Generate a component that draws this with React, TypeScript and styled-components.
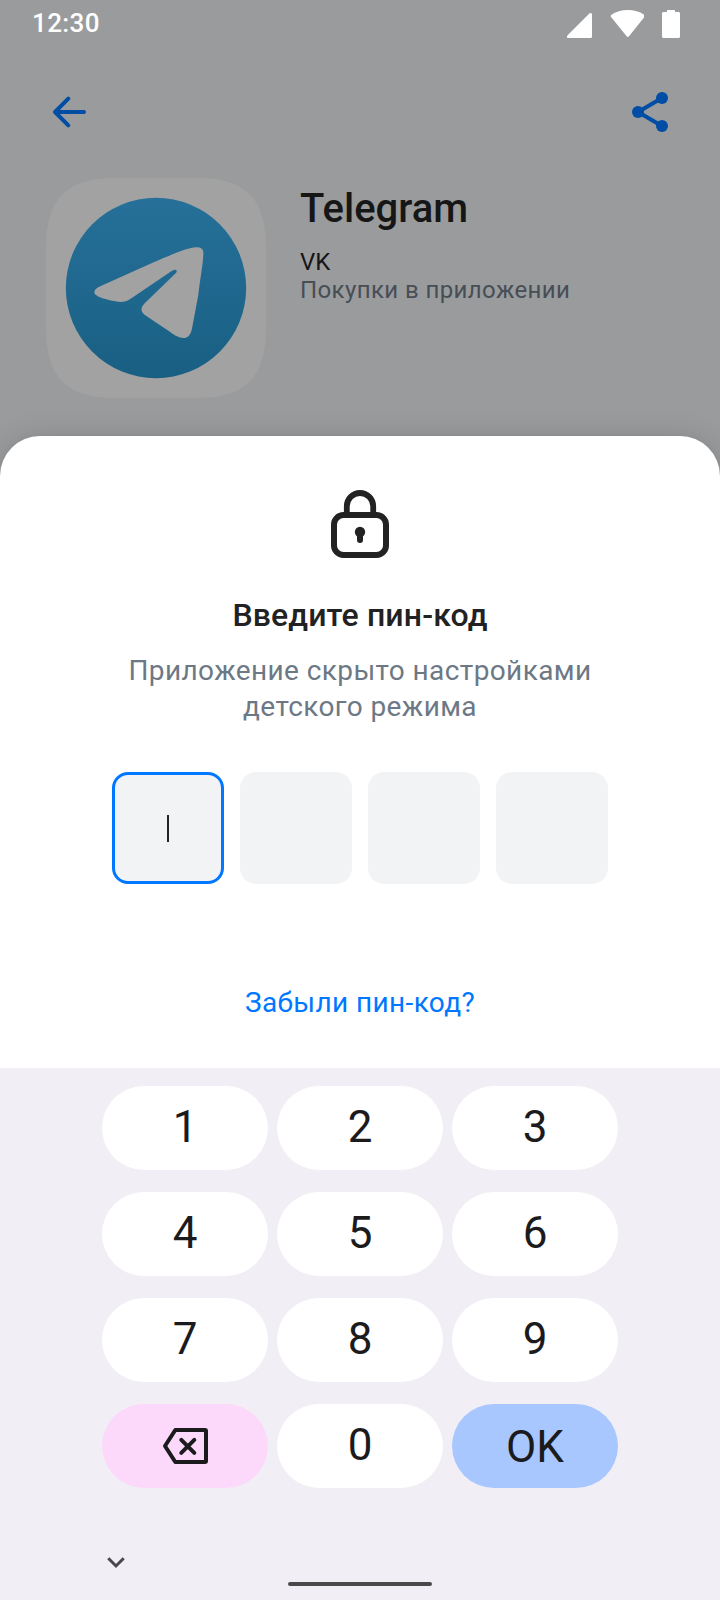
import React from "react";
import styled, { createGlobalStyle } from "styled-components";

const GlobalStyle = createGlobalStyle`
  * { box-sizing: border-box; }
  body { margin: 0; background: #fff; font-family: Roboto, "Liberation Sans", sans-serif; }
  button { border: 0; padding: 0; background: none; font: inherit; color: inherit; }
  svg { display: block; flex: none; }
  h1, h2, p { margin: 0; }
`;

const Screen = styled.div`
  width: 720px;
  height: 1600px;
  display: flex;
  flex-direction: column;
  overflow: hidden;
  background: #9a9b9d;
`;

const StatusBar = styled.header`
  height: 48px;
  display: flex;
  justify-content: space-between;
  padding: 8px 40px 0 32px;
  color: #fff;
`;

const Clock = styled.time`
  font-size: 26px;
  line-height: 30px;
  font-weight: 500;
  letter-spacing: 0.4px;
`;

const StatusIcons = styled.div`
  display: flex;
  gap: 18px;
  padding-top: 2px;
`;

const Toolbar = styled.nav`
  height: 128px;
  display: flex;
  align-items: center;
  justify-content: space-between;
  padding: 0 44px;
  color: #004da6;
`;

const IconButton = styled.button`
  width: 48px;
  height: 48px;
`;

const AppHeader = styled.section`
  height: 260px;
  display: flex;
  gap: 34px;
  padding: 2px 46px 0;
`;

const AppInfo = styled.div`
  padding-top: 7px;
`;

const AppName = styled.h1`
  font-size: 40px;
  line-height: 48px;
  font-weight: 500;
  color: #161616;
`;

const AppMeta = styled.p<{ $muted?: boolean }>`
  font-size: 24px;
  line-height: 28px;
  letter-spacing: ${(p) => (p.$muted ? "0.4px" : "0")};
  color: ${(p) => (p.$muted ? "#474e56" : "#161616")};
`;

const MetaList = styled.div`
  padding-top: 15px;
`;

const Sheet = styled.main`
  height: 632px;
  flex: none;
  display: flex;
  flex-direction: column;
  align-items: center;
  padding-top: 48px;
  border-radius: 40px 40px 0 0;
  background: #fff;
  box-shadow: 0 0 4px rgba(0, 0, 0, 0.04), 0 4px 32px rgba(0, 0, 0, 0.16);
`;

const Title = styled.h2`
  margin-top: 31px;
  font-size: 32px;
  line-height: 40px;
  font-weight: 500;
  letter-spacing: 0.15px;
  color: #222;
`;

const Description = styled.p`
  margin-top: 18px;
  width: 520px;
  text-align: center;
  font-size: 28px;
  line-height: 36px;
  letter-spacing: 0.4px;
  color: #6d7885;
`;

const PinRow = styled.div`
  display: flex;
  gap: 16px;
  margin-top: 47px;
`;

const PinCell = styled.div<{ $active?: boolean }>`
  width: 112px;
  height: 112px;
  display: flex;
  align-items: center;
  justify-content: center;
  border-radius: 16px;
  border: ${(p) => (p.$active ? "3px solid #0077ff" : "0")};
  background: #f2f3f5;
`;

const Caret = styled.span`
  width: 2px;
  height: 27px;
  margin-top: 1px;
  background: #222;
`;

const ForgotLink = styled.button`
  margin-top: 101px;
  font-size: 28px;
  line-height: 36px;
  letter-spacing: 0.38px;
  color: #0077ff;
`;

const Keyboard = styled.section`
  flex: 1;
  display: flex;
  flex-direction: column;
  align-items: center;
  padding-top: 18px;
  background: #f1eff5;
`;

const Keys = styled.div`
  display: grid;
  grid-template-columns: repeat(3, 166px);
  grid-auto-rows: 84px;
  gap: 22px 9px;
`;

const tones = { plain: "#fff", pink: "#fcd8fa", blue: "#a8c7ff" };

const Key = styled.button<{ $tone?: keyof typeof tones; $raise?: number }>`
  display: flex;
  align-items: center;
  justify-content: center;
  padding-bottom: ${(p) => p.$raise ?? 3}px;
  border-radius: 42px;
  background: ${(p) => tones[p.$tone ?? "plain"]};
  color: #1b1b1d;
  font-size: 44px;
  line-height: 52px;
`;

const OkLabel = styled.span`
  padding-top: 2px;
`;

const KeyboardFooter = styled.footer`
  align-self: stretch;
  display: flex;
  flex-direction: column;
  padding-top: 60px;
`;

const HideButton = styled.button`
  width: 32px;
  height: 32px;
  margin-left: 100px;
`;

const HomeBar = styled.div`
  width: 144px;
  height: 4px;
  align-self: center;
  margin-top: 2px;
  border-radius: 2px;
  background: #4a484b;
`;

const SignalIcon = () => (
  <svg width="26" height="28" viewBox="0 0 26 28" fill="#fff">
    <path d="M2 28h22.4c.9 0 1.6-.7 1.6-1.6V4.4c0-1.5-1.6-2-2.6-1L1.6 25.2C.6 26.3.7 28 2 28z" />
  </svg>
);

const WifiIcon = () => (
  <svg width="34" height="28" viewBox="-0.800 0 34 28" fill="#fff">
    <path d="M.6 4.8C5 1.600 10.600 0 17 0s12 1.600 16.400 4.800c.8.600.9 1.500.3 2.200L18.200 26.300c-.7.800-1.700.8-2.400 0L.3 7c-.6-.7-.5-1.600.3-2.200z" />
  </svg>
);

const BatteryIcon = () => (
  <svg width="18" height="28" viewBox="0 0 18 28" fill="#fff">
    <path d="M5 2V1c0-.6.400-1 1-1h6c.6 0 1 .4 1 1v1h3.500c.9 0 1.500.6 1.500 1.500v23c0 .9-.6 1.500-1.500 1.500h-15C.6 28 0 27.400 0 26.500v-23C0 2.600.6 2 1.500 2z" />
  </svg>
);

const BackIcon = () => (
  <svg width="48" height="48" viewBox="0 0 48 48" fill="none" stroke="currentColor" strokeWidth="4" strokeLinecap="round" strokeLinejoin="round">
    <path d="M40 24H11M24.300 10.700L11 24l13.300 13.300" />
  </svg>
);

const ShareIcon = () => (
  <svg width="48" height="48" viewBox="0 0 48 48" fill="currentColor">
    <path d="M34 10L10 24l24 14" fill="none" stroke="currentColor" strokeWidth="4" />
    <circle cx="10" cy="24" r="6" />
    <circle cx="34" cy="10" r="6" />
    <circle cx="34" cy="38" r="6" />
  </svg>
);

const TelegramLogo = () => (
  <svg width="220" height="220" viewBox="48 39 660 660">
    <defs>
      <linearGradient id="sky" x1="0" y1="0" x2="0" y2="1">
        <stop offset="0" stopColor="#267099" />
        <stop offset="1" stopColor="#195f83" />
      </linearGradient>
    </defs>
    <path fill="#a2a2a2" d="M48 249C48 100 109 39 258 39H498C647 39 708 100 708 249V489C708 638 647 699 498 699H258C109 699 48 638 48 489Z" />
    <circle cx="378" cy="369" r="270.500" fill="url(#sky)" />
    <path fill="#a2a2a2" d="M193 382C193 374 200 368 214 362L366 294C420 270 459 255 480 250C503 243 523 246 520 268C519 296 513 325 505 389L487 485C483 511 473 519 460 519C444 518 430 508 415 497L349 453C331 441 330 430 344 415L434 328C440 322 442 318 438 315C434 313 430 316 425 318L302 401C288 410 275 413 257 409C237 405 220 401 206 395C197 391 193 387 193 382Z" />
  </svg>
);

const LockIcon = () => (
  <svg width="80" height="80" viewBox="0 0 80 80" fill="none" stroke="#222" strokeWidth="6">
    <rect x="14" y="31" width="52" height="40" rx="9.500" />
    <path d="M26.800 31V22.200a13.200 13.200 0 0 1 26.400 0V31" strokeWidth="5.800" />
    <circle cx="40" cy="48" r="5.200" fill="#222" stroke="none" />
    <path d="M40 49v7" strokeLinecap="round" />
  </svg>
);

const BackspaceIcon = () => (
  <svg width="46" height="36" viewBox="0 0 46 36" fill="none" stroke="currentColor" strokeWidth="4">
    <path d="M13.300 2H43q1 0 1 1V33q0 1-1 1H13.300L3 18Z" strokeLinejoin="round" />
    <path d="M19.300 11.800l13 13M32.300 11.800l-13 13" strokeLinecap="round" />
  </svg>
);

const ChevronIcon = () => (
  <svg width="32" height="32" viewBox="0 0 32 32" fill="none" stroke="#474649" strokeWidth="3">
    <path d="M8.300 10.300L16 18l7.700-7.700" />
  </svg>
);

export default function App() {
  return (
    <>
      <GlobalStyle />
      <Screen>
        <StatusBar>
          <Clock>12:30</Clock>
          <StatusIcons>
            <SignalIcon />
            <WifiIcon />
            <BatteryIcon />
          </StatusIcons>
        </StatusBar>
        <Toolbar>
          <IconButton aria-label="Назад"><BackIcon /></IconButton>
          <IconButton aria-label="Поделиться"><ShareIcon /></IconButton>
        </Toolbar>
        <AppHeader>
          <TelegramLogo />
          <AppInfo>
            <AppName>Telegram</AppName>
            <MetaList>
              <AppMeta>VK</AppMeta>
              <AppMeta $muted>Покупки в приложении</AppMeta>
            </MetaList>
          </AppInfo>
        </AppHeader>
        <Sheet>
          <LockIcon />
          <Title>Введите пин-код</Title>
          <Description>Приложение скрыто настройками<br />детского режима</Description>
          <PinRow>
            <PinCell $active><Caret /></PinCell>
            <PinCell />
            <PinCell />
            <PinCell />
          </PinRow>
          <ForgotLink>Забыли пин-код?</ForgotLink>
        </Sheet>
        <Keyboard>
          <Keys>
            {[1, 2, 3, 4, 5, 6, 7, 8, 9].map((n) => (
              <Key key={n}>{n}</Key>
            ))}
            <Key $tone="pink" $raise={0} aria-label="Стереть"><BackspaceIcon /></Key>
            <Key>0</Key>
            <Key $tone="blue" $raise={0}><OkLabel>OK</OkLabel></Key>
          </Keys>
          <KeyboardFooter>
            <HideButton aria-label="Скрыть клавиатуру"><ChevronIcon /></HideButton>
            <HomeBar />
          </KeyboardFooter>
        </Keyboard>
      </Screen>
    </>
  );
}
